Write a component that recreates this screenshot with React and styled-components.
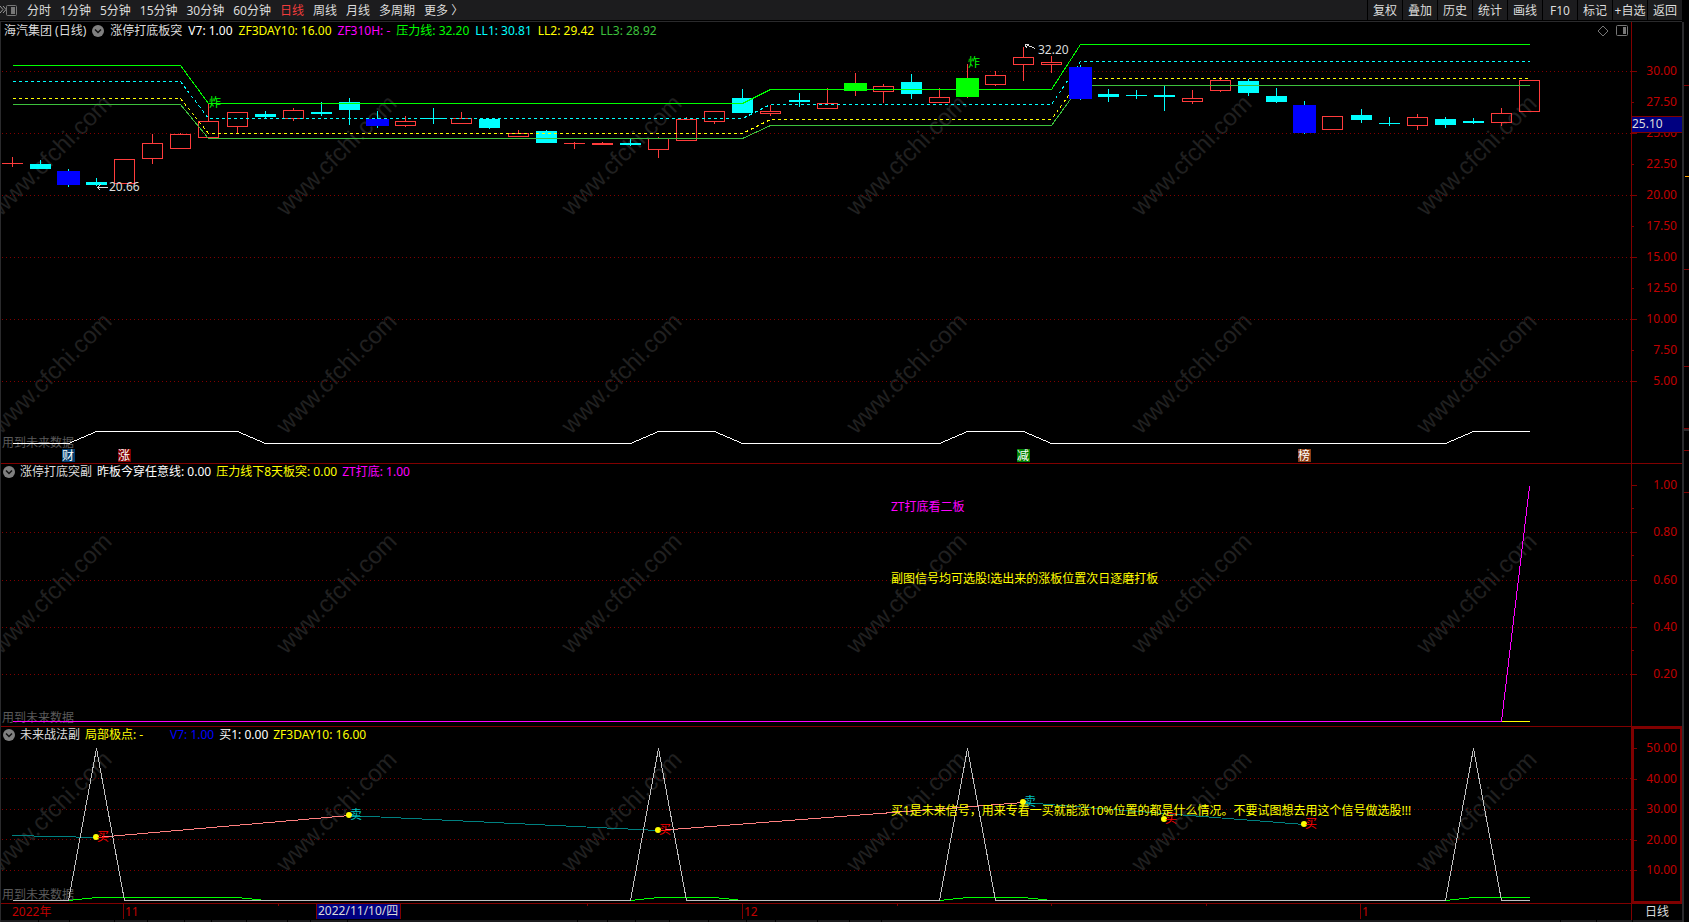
import React from 'react';
import styled, { createGlobalStyle } from 'styled-components';

const GlobalStyle = createGlobalStyle`
  * {
    box-sizing: border-box;
  }

  body {
    margin: 0;
    background: #000;
    color: #dcdcdc;
    font: 12px/16px "Noto Sans", "Noto Sans CJK SC", sans-serif;
    overflow: hidden;
  }
`

const Page = styled.div`
  position: relative;
  display: grid;
  grid-template-columns: minmax(0, 1fr) 7px;
`

const Watermarks = styled.svg`
  position: absolute;
  inset: 0;
  width: 100%;
  height: 100%;
  pointer-events: none;
`

const Toolbar = styled.nav`
  display: flex;
  justify-content: space-between;
  height: 20px;
  background: #1c1c1e;
  overflow: hidden;
`

const Periods = styled.div`
  display: flex;
  align-items: center;
  gap: 9px;
`

const BarButton = styled.button`
  padding: 2px 0 0;
  border: 0;
  background: none;
  color: ${props => props.$active ? '#f03c3c' : '#dcdcdc'};
  font: inherit;
  line-height: 18px;
  white-space: nowrap;
`

const Tools = styled.div`
  display: flex;
`

const ToolButton = styled(BarButton)`
  width: 35px;
  border-left: 1px solid #000;
`

const IconButton = styled.button`
  display: flex;
  padding: 0;
  border: 0;
  background: none;
`

const Terminal = styled.main`
  position: relative;
  grid-column: 1;
  margin-top: 1px;
  border-top: 1px solid #2a2a2c;
  border-left: 1px solid #2a2a2c;
`

const Panel = styled.section`
  display: grid;
  grid-template-columns: minmax(0, 1fr) 51px;
  border-bottom: 1px solid #800000;
`

const Legend = styled.header`
  display: flex;
  align-items: center;
  gap: ${props => props.$main ? '6px' : '5px'};
  height: 18px;
  padding: ${props => props.$main ? '0 3px' : '0 2px 2px'};
  white-space: nowrap;
`

const Corner = styled.div`
  display: flex;
  gap: 7px;
  margin-left: auto;
`

const Value = styled.span`
  min-width: ${props => props.$wide ? '80px' : '0'};
  color: ${props => props.color || '#dcdcdc'};
`

const Drawing = styled.svg`
  display: block;
  width: 100%;
  font: inherit;
`

const Scale = styled.ul`
  position: relative;
  display: flex;
  flex-direction: column;
  justify-content: space-between;
  margin: 0;
  padding: ${props => props.$pad};
  border-left: 1px solid #800000;
  box-shadow: ${props => props.$selected ? 'inset 0 0 0 2px #800000' : 'none'};
  list-style: none;
  color: #c00000;
  text-align: right;
`

const Tick = styled.li`
  position: relative;
  height: ${props => props.$blank ? '1px' : '16px'};
  padding-right: 5px;

  &::before {
    content: "";
    position: absolute;
    left: 0;
    top: ${props => props.$blank ? '0' : '8px'};
    width: ${props => props.$minor ? '2px' : '5px'};
    height: 1px;
    background: #800000;
  }
`

const PriceTag = styled.li`
  position: absolute;
  top: 94px;
  left: 0;
  right: 0;
  height: 17px;
  border: solid #800000;
  border-width: 1px 0;
  background: #000080;
  color: #dcdcdc;
  line-height: 14px;
  text-align: left;
`

const TimeRow = styled.footer`
  display: grid;
  grid-template-columns: minmax(0, 1fr) 51px;
  height: 16px;
`

const PeriodName = styled.div`
  border-left: 1px solid #800000;
  text-align: center;
`

const Side = styled.aside`
  grid-column: 2;
  grid-row: 2;
  margin-top: 2px;
  border-left: 2px solid #2a2a2c;
`

const PERIODS = ['分时', '1分钟', '5分钟', '15分钟', '30分钟', '60分钟', '日线', '周线', '月线', '多周期'];
const TOOLS = ['复权', '叠加', '历史', '统计', '画线', 'F10', '标记', '+自选', '返回'];

const GRID = '#800000';
const UP = '#ff3c3c';
const DOWN = '#00ffff';

// kind, high, body top, body bottom, low
const CANDLES = [
  ['up', 157, 163, 164, 167], ['down', 160, 164, 169, 169], ['blue', 169, 171, 185, 187],
  ['down', 178, 182, 185, 186], ['up', 159, 159, 184, 184], ['up', 134, 143, 159, 164],
  ['up', 133, 134, 149, 149], ['up', 103, 121, 138, 138], ['up', 112, 112, 127, 133],
  ['down', 111, 114, 117, 118], ['up', 108, 110, 119, 121], ['down', 102, 112, 114, 116],
  ['down', 98, 102, 110, 125], ['blue', 111, 119, 126, 128], ['up', 116, 121, 126, 127],
  ['down', 108, 118, 119, 124], ['up', 112, 118, 124, 124], ['down', 119, 119, 128, 129],
  ['up', 130, 133, 137, 137], ['down', 130, 131, 143, 143], ['up', 142, 143, 144, 149],
  ['up', 142, 143, 145, 145], ['down', 139, 143, 145, 146], ['up', 137, 138, 150, 158],
  ['up', 117, 119, 141, 141], ['up', 111, 111, 122, 124], ['down', 89, 98, 113, 113],
  ['up', 105, 111, 114, 116], ['down', 93, 100, 102, 107], ['up', 88, 103, 109, 109],
  ['green', 73, 83, 91, 96], ['up', 84, 86, 92, 103], ['down', 74, 82, 94, 99],
  ['up', 88, 97, 103, 103], ['green', 64, 78, 97, 98], ['up', 71, 75, 85, 86],
  ['up', 47, 57, 65, 81], ['up', 56, 62, 65, 73], ['blue', 65, 67, 99, 100],
  ['down', 89, 94, 97, 102], ['down', 90, 95, 96, 99], ['down', 86, 95, 97, 111],
  ['up', 90, 98, 102, 104], ['up', 77, 80, 91, 92], ['down', 79, 81, 93, 96],
  ['down', 88, 96, 102, 103], ['blue', 101, 105, 133, 134], ['up', 116, 116, 130, 130],
  ['down', 109, 115, 120, 123], ['down', 117, 123, 124, 126], ['up', 114, 117, 126, 130],
  ['down', 117, 119, 125, 128], ['down', 118, 121, 123, 124], ['up', 108, 113, 123, 126],
  ['up', 80, 80, 112, 112],
];

const BANDS = [
  { color: '#00ff00', levels: [65, 103, 89, 44] },
  { color: '#00ffff', levels: [81, 118, 104, 61], dash: '3 3' },
  { color: '#ffff00', levels: [98, 133, 119, 78], dash: '3 3' },
  { color: '#3cc03c', levels: [104, 138, 125, 85] },
];

const BADGES = [
  { day: 2, text: '财', color: '#003c6e' },
  { day: 4, text: '涨', color: '#800000' },
  { day: 36, text: '减', color: '#008000' },
  { day: 46, text: '榜', color: '#8c3c14' },
];

const SWINGS = [
  { day: 3, y: 837, buy: true },
  { day: 12, y: 815 },
  { day: 23, y: 830, buy: true },
  { day: 36, y: 802 },
  { day: 41, y: 819, buy: true },
  { day: 46, y: 824, buy: true },
];

// runs of days on which the V7 signal is on
const RUNS = [[3, 8], [23, 25], [34, 36], [52, 54]];
const PEAKS = [3, 23, 34, 52];

const dayX = day => Math.floor(12.2 + day * 28.1);

const toPoints = list => list.map(([day, y]) => `${dayX(day)},${y}`).join(' ');

const bandPoints = ([a, b, c, d]) => toPoints([
  [0, a], [6, a], [7, b], [26, b], [27, c], [37, c], [38, d], [54, d],
]);

const signalPoints = (off, on) => {
  const list = [[0, off]];
  RUNS.forEach(([from, to]) => {
    list.push([from - 1, off], [from, on], [to, on]);
    if (to < 54) list.push([to + 1, off]);
  });
  return toPoints(list);
};

const peakPoints = (base, top) => {
  const list = [[0, base]];
  PEAKS.forEach(day => list.push([day - 1, base], [day, top], [day + 1, base]));
  list.push([54, base]);
  return toPoints(list);
};

const Collapse = () => (
  <IconButton aria-label="折叠">
    <svg width="12" height="12" viewBox="0 0 12 12">
      <circle cx="6" cy="6" r="6" fill="#808080" />
      <path d="M3 4.5 6 7.5 9 4.5" fill="none" stroke="#111" strokeWidth="1.5" />
    </svg>
  </IconButton>
);

const SidePanelIcon = () => (
  <svg width="12" height="12" viewBox="0 0 12 12">
    <rect x="0.5" y="0.5" width="11" height="10" rx="1" fill="none" stroke="#777" />
    <rect x="7" y="2" width="3" height="7" fill="#777" />
  </svg>
);

// plots keep the terminal's own pixel grid; top is where the plot starts in it
const Plot = ({ top, height, grid, children }) => (
  <Drawing height={height}>
    {grid.map(y => (
      <line
        key={y}
        x1="1"
        x2="100%"
        y1={y - top + 0.5}
        y2={y - top + 0.5}
        stroke={GRID}
        strokeDasharray="1 3"
        shapeRendering="crispEdges"
      />
    ))}
    <g transform={`translate(-1 ${-top})`}>{children}</g>
  </Drawing>
);

const Lines = ({ children }) => (
  <g transform="translate(0.5 0.5)" fill="none" shapeRendering="crispEdges">{children}</g>
);

const Candle = ({ day, candle }) => {
  const [kind, high, top, bottom, low] = candle;
  const x = dayX(day);
  const hollow = kind === 'up';
  const big = kind === 'blue' || kind === 'green';
  const wick = hollow || kind === 'green' ? UP : DOWN;
  const body = { blue: '#0000ff', green: '#00ff00', down: DOWN }[kind];
  const half = big ? 11 : 10;
  return (
    <g shapeRendering="crispEdges">
      <rect x={x} y={high} width="1" height={top - high} fill={wick} />
      <rect x={x} y={bottom} width="1" height={low - bottom} fill={wick} />
      {hollow && bottom - top > 2 ?
        <rect x={x - half + 0.5} y={top + 0.5} width={half * 2} height={bottom - top - 1} fill="none" stroke={UP} /> :
        <rect x={x - half} y={top} width={half * 2 + 1} height={bottom - top} fill={body || UP} />}
    </g>
  );
};

const FutureNote = ({ y }) => <text x="2" y={y} fill="#5a5a5a">用到未来数据</text>;

const isBig = kind => kind === 'blue' || kind === 'green';

const MainChart = () => (
  <Plot top={40} height={423} grid={[71, 133, 195, 257, 319, 381]}>
    <FutureNote y={447} />
    {CANDLES.map((candle, day) => <Candle key={day} day={day} candle={candle} />)}
    <Lines>
      {BANDS.map(band => (
        <polyline
          key={band.color}
          points={bandPoints(band.levels)}
          stroke={band.color}
          strokeDasharray={band.dash}
        />
      ))}
      <polyline points={signalPoints(443, 431)} stroke="#fff" />
      <path d="M97 187H107M97 187L100 184M97 187L100 190M1025 44L1035 48M1025 44H1028M1025 44L1026 48" stroke="#dcdcdc" />
    </Lines>
    {CANDLES.map((candle, day) => (
      isBig(candle[0]) && day !== 13 && day !== 30 ? <Candle key={day} day={day} candle={candle} /> : null
    ))}
    <text x="109" y="191" fill="#dcdcdc">20.66</text>
    <text x="1038" y="54" fill="#dcdcdc">32.20</text>
    <text x="209" y="107" fill="#00ff00">炸</text>
    <text x="968" y="67" fill="#00ff00">炸</text>
    {BADGES.map(badge => (
      <g key={badge.text}>
        <rect x={dayX(badge.day) - 6} y="449" width="13" height="13" fill={badge.color} />
        <text x={dayX(badge.day) - 6} y="460" fill="#fff">{badge.text}</text>
      </g>
    ))}
  </Plot>
);

const BoardChart = () => (
  <Plot top={482} height={244} grid={[532, 580, 627, 674]}>
    <FutureNote y={722} />
    <Lines>
      <polyline points={toPoints([[53, 721], [54, 721]])} stroke="#ffff00" />
      <polyline points={toPoints([[0, 721], [53, 721], [54, 486]])} stroke="#ff00ff" />
    </Lines>
    <text x="891" y="511" fill="#ff00ff">ZT打底看二板</text>
    <text x="891" y="583" fill="#ffff00">副图信号均可选股!选出来的涨板位置次日逐磨打板</text>
  </Plot>
);

const SwingChart = () => (
  <Plot top={745} height={158} grid={[778, 809, 839, 870]}>
    <FutureNote y={899} />
    <Lines>
      <polyline points={toPoints([[0, 835], [3, 837]])} stroke="#008080" />
      <polyline points={toPoints([[3, 837], [12, 815]])} stroke="#ff8080" />
      <polyline points={toPoints([[12, 815], [23, 830]])} stroke="#008080" />
      <polyline points={toPoints([[23, 830], [36, 802]])} stroke="#ff8080" />
      <polyline points={toPoints([[36, 802], [46, 824]])} stroke="#008080" />
      <polyline points={signalPoints(900, 897)} stroke="#00ff00" />
      <polyline points={peakPoints(900, 748)} stroke="#c0c0c0" />
    </Lines>
    {SWINGS.map(swing => (
      <g key={swing.day}>
        <circle cx={dayX(swing.day)} cy={swing.y} r="3" fill="#ffff00" />
        <text x={dayX(swing.day) + 1} y={swing.y + 4} fill={swing.buy ? '#ff0000' : '#00c0c0'}>
          {swing.buy ? '买' : '卖'}
        </text>
      </g>
    ))}
    <text x="891" y="815" fill="#ffff00">
      买1是未来信号，用来专看一买就能涨10%位置的都是什么情况。不要试图想去用这个信号做选股!!!
    </text>
  </Plot>
);

const TimeAxis = () => (
  <Drawing height="16">
    <g fill={GRID}>
      {[122, 741, 1359].map(x => <rect key={x} x={x} y="0" width="1" height="15" />)}
      {[277, 586, 896, 1050, 1205].map(x => <rect key={x} x={x} y="0" width="1" height="2" />)}
    </g>
    <g fill="#c00000">
      <text x="11" y="12">2022年</text>
      <text x="124" y="12">11</text>
      <text x="743" y="12">12</text>
      <text x="1361" y="12">1</text>
    </g>
    <rect x="315" y="0" width="85" height="15" fill="#800000" />
    <rect x="316" y="0" width="83" height="15" fill="#000080" />
    <text x="317" y="11" fill="#dcdcdc">2022/11/10/四</text>
  </Drawing>
);

const ValueScale = ({ labels, pad, selected }) => (
  <Scale $pad={pad} $selected={selected}>
    {labels.map((label, i) => (
      <React.Fragment key={label}>
        {i > 0 && <Tick $blank $minor />}
        <Tick>{label}</Tick>
      </React.Fragment>
    ))}
  </Scale>
);

const PRICES = ['30.00', '27.50', '25.00', '22.50', '20.00', '17.50', '15.00', '12.50', '10.00', '7.50', '5.00'];
const GAPS = [37, 68, 113, 146, 183, 210, 245, 286, 309, 346, 576, 606, 634, 668, 707, 745, 774, 816, 848, 880, 1559, 1595, 1631];

const App = () => (
  <Page>
    <GlobalStyle />
    <Watermarks aria-hidden="true">
      {[217, 435, 655, 873].map(y => (
        [1, 286, 571, 856, 1141, 1426].map(x => (
          <text
            key={`${x}-${y}`}
            transform={`translate(${x} ${y}) rotate(-45)`}
            fill="#202020"
            fontFamily="Liberation Sans, sans-serif"
            fontSize="24"
          >
            www.cfchi.com
          </text>
        ))
      ))}
    </Watermarks>
    <Toolbar>
      <Periods>
        <IconButton aria-label="侧栏">
          <svg width="18" height="12" viewBox="0 0 18 12">
            <path d="M0 2 3 5.5 0 9M3 2 6 5.5 3 9" fill="none" stroke="#999" />
            <rect x="6.5" y="1.5" width="10" height="10" rx="1" fill="none" stroke="#777" />
            <rect x="11" y="3" width="4" height="7" fill="#777" />
          </svg>
        </IconButton>
        {PERIODS.map(name => <BarButton key={name} $active={name === '日线'}>{name}</BarButton>)}
        <BarButton>更多 〉</BarButton>
      </Periods>
      <Tools>
        {TOOLS.map(name => <ToolButton key={name}>{name}</ToolButton>)}
      </Tools>
    </Toolbar>
    <Terminal>
      <Panel>
        <div>
          <Legend $main>
            <Value>海汽集团 (日线)</Value>
            <Collapse />
            <Value>涨停打底板突</Value>
            <Value color="#fff">V7: 1.00</Value>
            <Value color="#ffff00">ZF3DAY10: 16.00</Value>
            <Value color="#ff00ff">ZF310H: -</Value>
            <Value color="#00ff00">压力线: 32.20</Value>
            <Value color="#00ffff">LL1: 30.81</Value>
            <Value color="#ffff00">LL2: 29.42</Value>
            <Value color="#3cc03c">LL3: 28.92</Value>
            <Corner>
              <IconButton aria-label="标记">
                <svg width="12" height="12" viewBox="0 0 12 12">
                  <path d="M6 1 11 6 6 11 1 6Z" fill="none" stroke="#777" />
                </svg>
              </IconButton>
              <IconButton aria-label="右侧栏"><SidePanelIcon /></IconButton>
            </Corner>
          </Legend>
          <MainChart />
        </div>
        <Scale $pad="41px 0 74px">
          {PRICES.map((price, i) => <Tick key={price} $minor={i % 2 === 1}>{price}</Tick>)}
          <PriceTag>25.10</PriceTag>
        </Scale>
      </Panel>
      <Panel>
        <div>
          <Legend>
            <Collapse />
            <Value>涨停打底突副</Value>
            <Value color="#fff">昨板今穿任意线: 0.00</Value>
            <Value color="#ffff00">压力线下8天板突: 0.00</Value>
            <Value color="#ff00ff">ZT打底: 1.00</Value>
          </Legend>
          <BoardChart />
        </div>
        <ValueScale pad="13px 0 44px" labels={['1.00', '0.80', '0.60', '0.40', '0.20']} />
      </Panel>
      <Panel>
        <div>
          <Legend>
            <Collapse />
            <Value>未来战法副</Value>
            <Value color="#ffff00" $wide>局部极点: -</Value>
            <Value color="#0000ff">V7: 1.00</Value>
            <Value color="#fff">买1: 0.00</Value>
            <Value color="#ffff00">ZF3DAY10: 16.00</Value>
          </Legend>
          <SwingChart />
        </div>
        <ValueScale selected pad="13px 0 25px" labels={['50.00', '40.00', '30.00', '20.00', '10.00']} />
      </Panel>
      <TimeRow>
        <TimeAxis />
        <PeriodName>日线</PeriodName>
      </TimeRow>
      <Drawing height="2">
        <rect width="100%" height="2" fill="#1c1c1e" />
        {GAPS.map(x => <rect key={x} x={x} width="1" height="2" />)}
      </Drawing>
    </Terminal>
    <Side>
      <Drawing height="480">
        {[63, 247, 344, 406, 428, 470].map(y => <rect key={y} y={y} width="5" height="1" fill={GRID} />)}
        <rect y="407" width="5" height="2" fill="#2a2a2c" />
        <rect x="1" y="154" width="4" height="1" fill="#ffa500" />
      </Drawing>
    </Side>
  </Page>
);

export default App;
